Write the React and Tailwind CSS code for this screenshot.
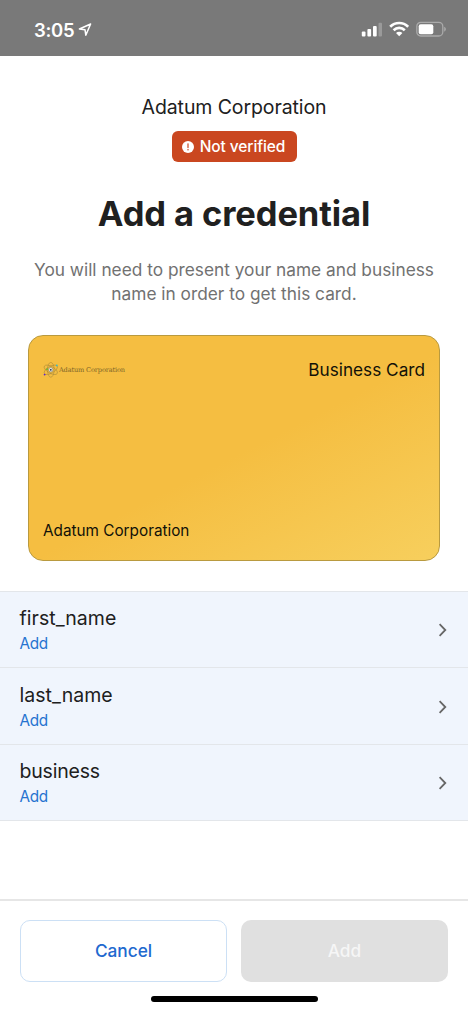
import React from "react";

function StatusBar() {
  return (
    <div className="flex h-14 shrink-0 items-start justify-between bg-[#797979] pr-[21px] pl-[34px] text-white">
      <div className="flex items-center gap-[4px] pt-[18px]">
        <span className="text-[18.5px] leading-6 font-semibold tracking-[-0.3px]">3:05</span>
        <svg width="14" height="14" viewBox="0 0 14 14" fill="none" stroke="white" strokeWidth="1.5" strokeLinejoin="round">
          <path d="M12.6 1 L1.4 6 L7 6.7 L7.8 12.2 Z" />
        </svg>
      </div>
      <div className="flex items-center gap-[7px] pt-[21px]">
        <svg width="21" height="16" viewBox="0 0 21 16" fill="white">
          <rect x="0.8" y="10.5" width="3.7" height="5" rx="1" />
          <rect x="6.4" y="8" width="3.7" height="7.5" rx="1" />
          <rect x="12" y="5" width="3.7" height="10.5" rx="1" />
          <rect x="17.5" y="1.8" width="3.5" height="13.7" rx="1" opacity="0.25" />
        </svg>
        <svg width="20" height="16" viewBox="0 0 20 16" fill="none" stroke="white" strokeWidth="2.7">
          <path d="M1.2 5.8 A12.6 12.6 0 0 1 19.2 5.8" />
          <path d="M4.6 9.2 A7.9 7.9 0 0 1 15.8 9.2" />
          <path d="M10.2 15.3 L7 12 A4.6 4.6 0 0 1 13.4 12 Z" fill="white" stroke="none" />
        </svg>
        <svg width="31" height="16" viewBox="0 0 31 16" fill="none">
          <rect x="0.8" y="1.4" width="26" height="13.6" rx="4" stroke="#aaaaaa" strokeWidth="1.3" />
          <rect x="2.7" y="3.2" width="14.6" height="10" rx="2" fill="white" />
          <path d="M28.2 5.8 C30.4 6.6 30.4 9.8 28.2 10.6 Z" fill="#aaaaaa" />
        </svg>
      </div>
    </div>
  );
}

function AtomLogo() {
  return (
    <svg width="16" height="16" viewBox="0 0 16 16" fill="none">
      <g stroke="#a08338" strokeWidth="0.5">
        <ellipse cx="7.8" cy="7.8" rx="3.4" ry="7.4" />
        <ellipse cx="7.8" cy="7.8" rx="3.4" ry="7.4" transform="rotate(60 7.8 7.8)" />
        <ellipse cx="7.8" cy="7.8" rx="3.4" ry="7.4" transform="rotate(-60 7.8 7.8)" />
      </g>
      <circle cx="7.8" cy="7.8" r="2.2" fill="#e8eef0" stroke="#6b6650" strokeWidth="0.5" />
      <circle cx="7.8" cy="7.8" r="0.9" fill="#222b45" />
      <circle cx="13.8" cy="3.4" r="0.9" fill="#35b9c8" />
      <circle cx="4" cy="7.2" r="0.9" fill="#62b832" />
      <circle cx="1.6" cy="12.6" r="0.9" fill="#5b1de0" />
    </svg>
  );
}

function ClaimRow({ name, nameClass }) {
  return (
    <div className="flex h-[76.4px] items-center justify-between border-b border-[#e3e6ea] bg-[#f0f5fd] pr-[20px] pl-[19.5px]">
      <div className="-mt-px flex flex-col">
        <span className={`text-[19.5px] leading-7 text-[#202020] ${nameClass}`}>{name}</span>
        <span className="pt-px text-[15.3px] leading-[21px] tracking-[-0.35px] text-[#2673d0]">Add</span>
      </div>
      <svg className="mt-px" width="10" height="14" viewBox="0 0 10 14" fill="none" stroke="#666" strokeWidth="1.8">
        <path d="M1.6 1.2 L7.3 7 L1.6 12.8" />
      </svg>
    </div>
  );
}

export default function App() {
  return (
    <div className="flex h-[1012px] w-[468px] flex-col overflow-hidden bg-white font-['Inter',sans-serif]">
      <StatusBar />
      <main className="flex flex-1 flex-col">
        <header className="flex flex-col items-center text-center">
          <div className="mt-9 text-[19.5px] leading-[30px] tracking-[-0.1px] text-[#202020]">Adatum Corporation</div>
          <div className="mt-[9px] flex h-[31px] w-[125px] items-center justify-center gap-[6px] rounded-md bg-[#ca4720] pr-px text-white">
            <svg width="12" height="12" viewBox="0 0 12 12">
              <circle cx="6" cy="6" r="6" fill="white" />
              <path d="M6 2.8 V6.6" stroke="#ca4720" strokeWidth="1.2" strokeLinecap="round" />
              <circle cx="6" cy="8.7" r="0.75" fill="#ca4720" />
            </svg>
            <span className="text-[15.5px] leading-5 font-medium tracking-[-0.1px]">Not verified</span>
          </div>
          <h1 className="mt-[30px] text-[34.5px] leading-[44px] font-bold tracking-[-0.1px] text-[#202020]">Add a credential</h1>
          <p className="mt-[22px] text-[17.3px] leading-6 text-[#717171]">
            You will need to present your name and business
            <br />
            name in order to get this card.
          </p>
        </header>
        <section className="mx-[28px] mt-[29px] flex h-[226px] shrink-0 flex-col justify-between rounded-[15px] border border-[#b99a3f] bg-[linear-gradient(153deg,#f5be41_0%,#f5be41_52%,#f7cf5d_100%)] px-[14px] pt-[20px] pb-[17px] text-[#111108]">
          <div className="flex items-center justify-between">
            <div className="flex items-center">
              <AtomLogo />
              <span className="font-['DejaVu_Serif',serif] text-[6.6px] leading-4 tracking-[-0.15px] text-[#7c6428]">Adatum Corporation</span>
            </div>
            <span className="text-[17.2px] leading-7">Business Card</span>
          </div>
          <span className="text-[15.3px] leading-6">Adatum Corporation</span>
        </section>
        <section className="mt-[30px] border-t border-[#e3e6ea]">
          <ClaimRow name="first_name" nameClass="tracking-[0.05px]" />
          <ClaimRow name="last_name" nameClass="tracking-[0.05px]" />
          <ClaimRow name="business" nameClass="tracking-[-0.2px]" />
        </section>
      </main>
      <footer className="flex h-[113px] shrink-0 flex-col items-center border-t-2 border-[#e6e6e6] px-[20px] pt-[19px]">
        <div className="grid w-full grid-cols-2 gap-[14px]">
          <button className="h-[62px] rounded-[10px] border border-[#cce0f5] text-[17.3px] font-medium tracking-[-0.05px] text-[#2169cf]">Cancel</button>
          <button className="h-[62px] rounded-[10px] bg-[#e0e0e0] text-[17.3px] font-medium text-[#f6f6f6]">Add</button>
        </div>
        <div className="mt-[14px] h-[6px] w-[167px] rounded-full bg-black" />
      </footer>
    </div>
  );
}
